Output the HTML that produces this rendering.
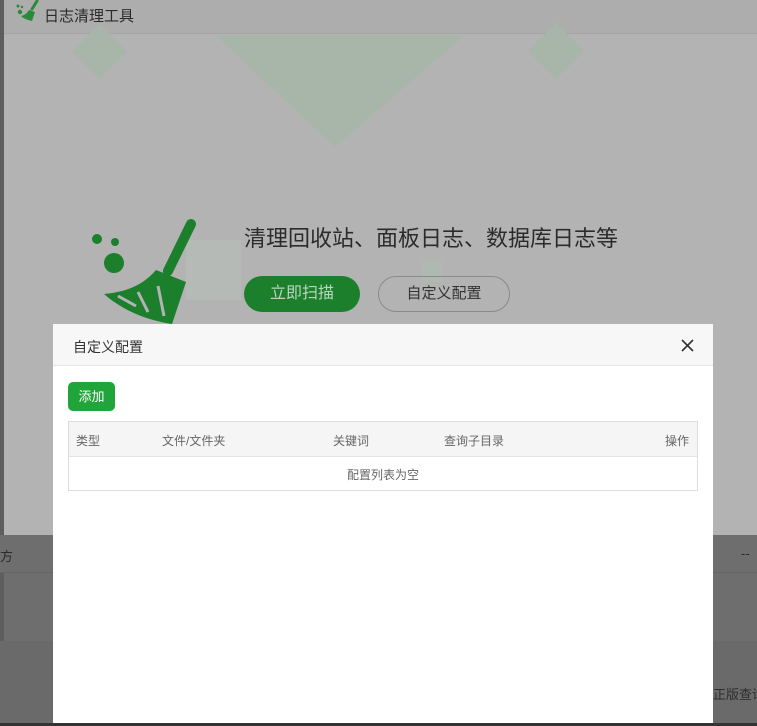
<!DOCTYPE html>
<html><head><meta charset="utf-8"><style>
*{margin:0;padding:0;box-sizing:border-box}
body{width:757px;height:726px;overflow:hidden;background:#6e6e6e;font-family:"Liberation Sans","Noto Sans CJK SC",sans-serif;position:relative}
.abs{position:absolute}
.win{left:4px;top:0;width:753px;height:535px;background:#b3b3b3;overflow:hidden}
.hdr{left:0;top:0;width:753px;height:34px;background:#adadad;border-bottom:1px solid #a4a4a4}
.dia{background:#a8b6aa;transform:rotate(45deg)}
.t{color:#333}
</style></head><body>
<div class="abs" style="left:0;top:0;width:4px;height:726px;background:#5e5e5e"></div>
<div class="abs" style="left:0;top:535px;width:757px;height:38px;background:#6e6e6e;border-bottom:1px solid #646464"></div>
<div class="abs t" style="left:0;top:546px;font-size:13px;color:#2a2a2a">方</div>
<div class="abs" style="left:741px;top:546px;font-size:13px;color:#2a2a2a;white-space:nowrap">--</div>
<div class="abs" style="left:0;top:641px;width:757px;height:85px;background:#6a6a6a"></div>
<div class="abs" style="left:713px;top:684px;font-size:13px;color:#2e2e2e;white-space:nowrap">正版查询</div>
<div class="abs" style="left:0;top:723px;width:757px;height:3px;background:#333"></div>
<div class="abs win">
  <div class="abs hdr"></div>
  <svg class="abs" style="left:11px;top:0" width="26" height="24" viewBox="0 0 26 24"><circle cx="3" cy="6" r="1.5" fill="#2a8a3a"/><circle cx="7" cy="7" r="1.2" fill="#2a8a3a"/><circle cx="5" cy="12" r="2.2" fill="#2a8a3a"/><path d="M22 1 L17 9" stroke="#2a8a3a" stroke-width="3" stroke-linecap="round"/><path d="M14 10 L20 12 L17 21 C13 20 9 19 6 16 C10 15 12 13 14 10 Z" fill="#2a8a3a"/></svg>
  <div class="abs" style="left:40px;top:5px;font-size:15px;color:#2a2a2a">日志清理工具</div>
  <div class="abs dia" style="left:76px;top:32px;width:39px;height:39px"></div>
  <div class="abs" style="left:211px;top:35px;width:250px;height:112px;background:#a8b6aa;clip-path:polygon(0 0,100% 0,48% 100%)"></div>
  <div class="abs dia" style="left:532px;top:31px;width:40px;height:40px"></div>
  <div class="abs" style="left:182px;top:240px;width:55px;height:60px;background:#b6bab6"></div>
  <div class="abs" style="left:418px;top:260px;width:20px;height:22px;background:#b0b8b2"></div>
  <svg class="abs" style="left:84px;top:214px" width="110" height="112" viewBox="0 0 110 112"><circle cx="9" cy="25" r="5" fill="#1b7f2b"/><circle cx="27" cy="28" r="4" fill="#1b7f2b"/><circle cx="26" cy="49" r="10" fill="#1b7f2b"/><path d="M103 10 L80 57" stroke="#1b7f2b" stroke-width="10" stroke-linecap="round"/><path d="M68 56 L98 68 L84 110 C58 106 34 96 16 80 C40 78 56 70 68 56 Z" fill="#1b7f2b"/><path d="M30 82 L48 92 M50 78 L60 98 M70 72 L76 102" stroke="#b3b3b3" stroke-width="3"/></svg>
  <div class="abs" style="left:240px;top:221px;font-size:22px;color:#2b2b2b">清理回收站、面板日志、数据库日志等</div>
  <div class="abs" style="left:240px;top:276px;width:116px;height:36px;border-radius:18px;background:#1b7f2b;color:#b8d6bd;font-size:16px;text-align:center;line-height:36px">立即扫描</div>
  <div class="abs" style="left:374px;top:276px;width:132px;height:36px;border-radius:18px;border:1px solid #8a8a8a;color:#333;font-size:15px;text-align:center;line-height:34px">自定义配置</div>
</div>
<div class="abs" style="left:53px;top:324px;width:660px;height:399px;background:#fff">
  <div class="abs" style="left:0;top:0;width:660px;height:42px;background:#f7f7f7;border-bottom:1px solid #e6e6e6"></div>
  <div class="abs" style="left:20px;top:13px;font-size:14px;color:#333">自定义配置</div>
  <svg class="abs" style="left:628px;top:15px" width="13" height="13" viewBox="0 0 13 13"><path d="M1 1L12 12M12 1L1 12" stroke="#333" stroke-width="1.6"/></svg>
  <div class="abs" style="left:15px;top:58px;width:47px;height:29px;border-radius:5px;background:#20a53a;color:#fff;font-size:13px;text-align:center;line-height:29px">添加</div>
  <div class="abs" style="left:15px;top:97px;width:630px;height:70px;border:1px solid #ddd">
    <div class="abs" style="left:0;top:0;width:628px;height:35px;background:#f5f5f5;border-bottom:1px solid #e3e3e3;font-size:12px;color:#666">
      <span class="abs" style="left:7px;top:10px">类型</span>
      <span class="abs" style="left:93px;top:10px">文件/文件夹</span>
      <span class="abs" style="left:264px;top:10px">关键词</span>
      <span class="abs" style="left:375px;top:10px">查询子目录</span>
      <span class="abs" style="left:596px;top:10px">操作</span>
    </div>
    <div class="abs" style="left:0;top:44px;width:628px;text-align:center;font-size:12px;color:#666">配置列表为空</div>
  </div>
</div>
</body></html>
